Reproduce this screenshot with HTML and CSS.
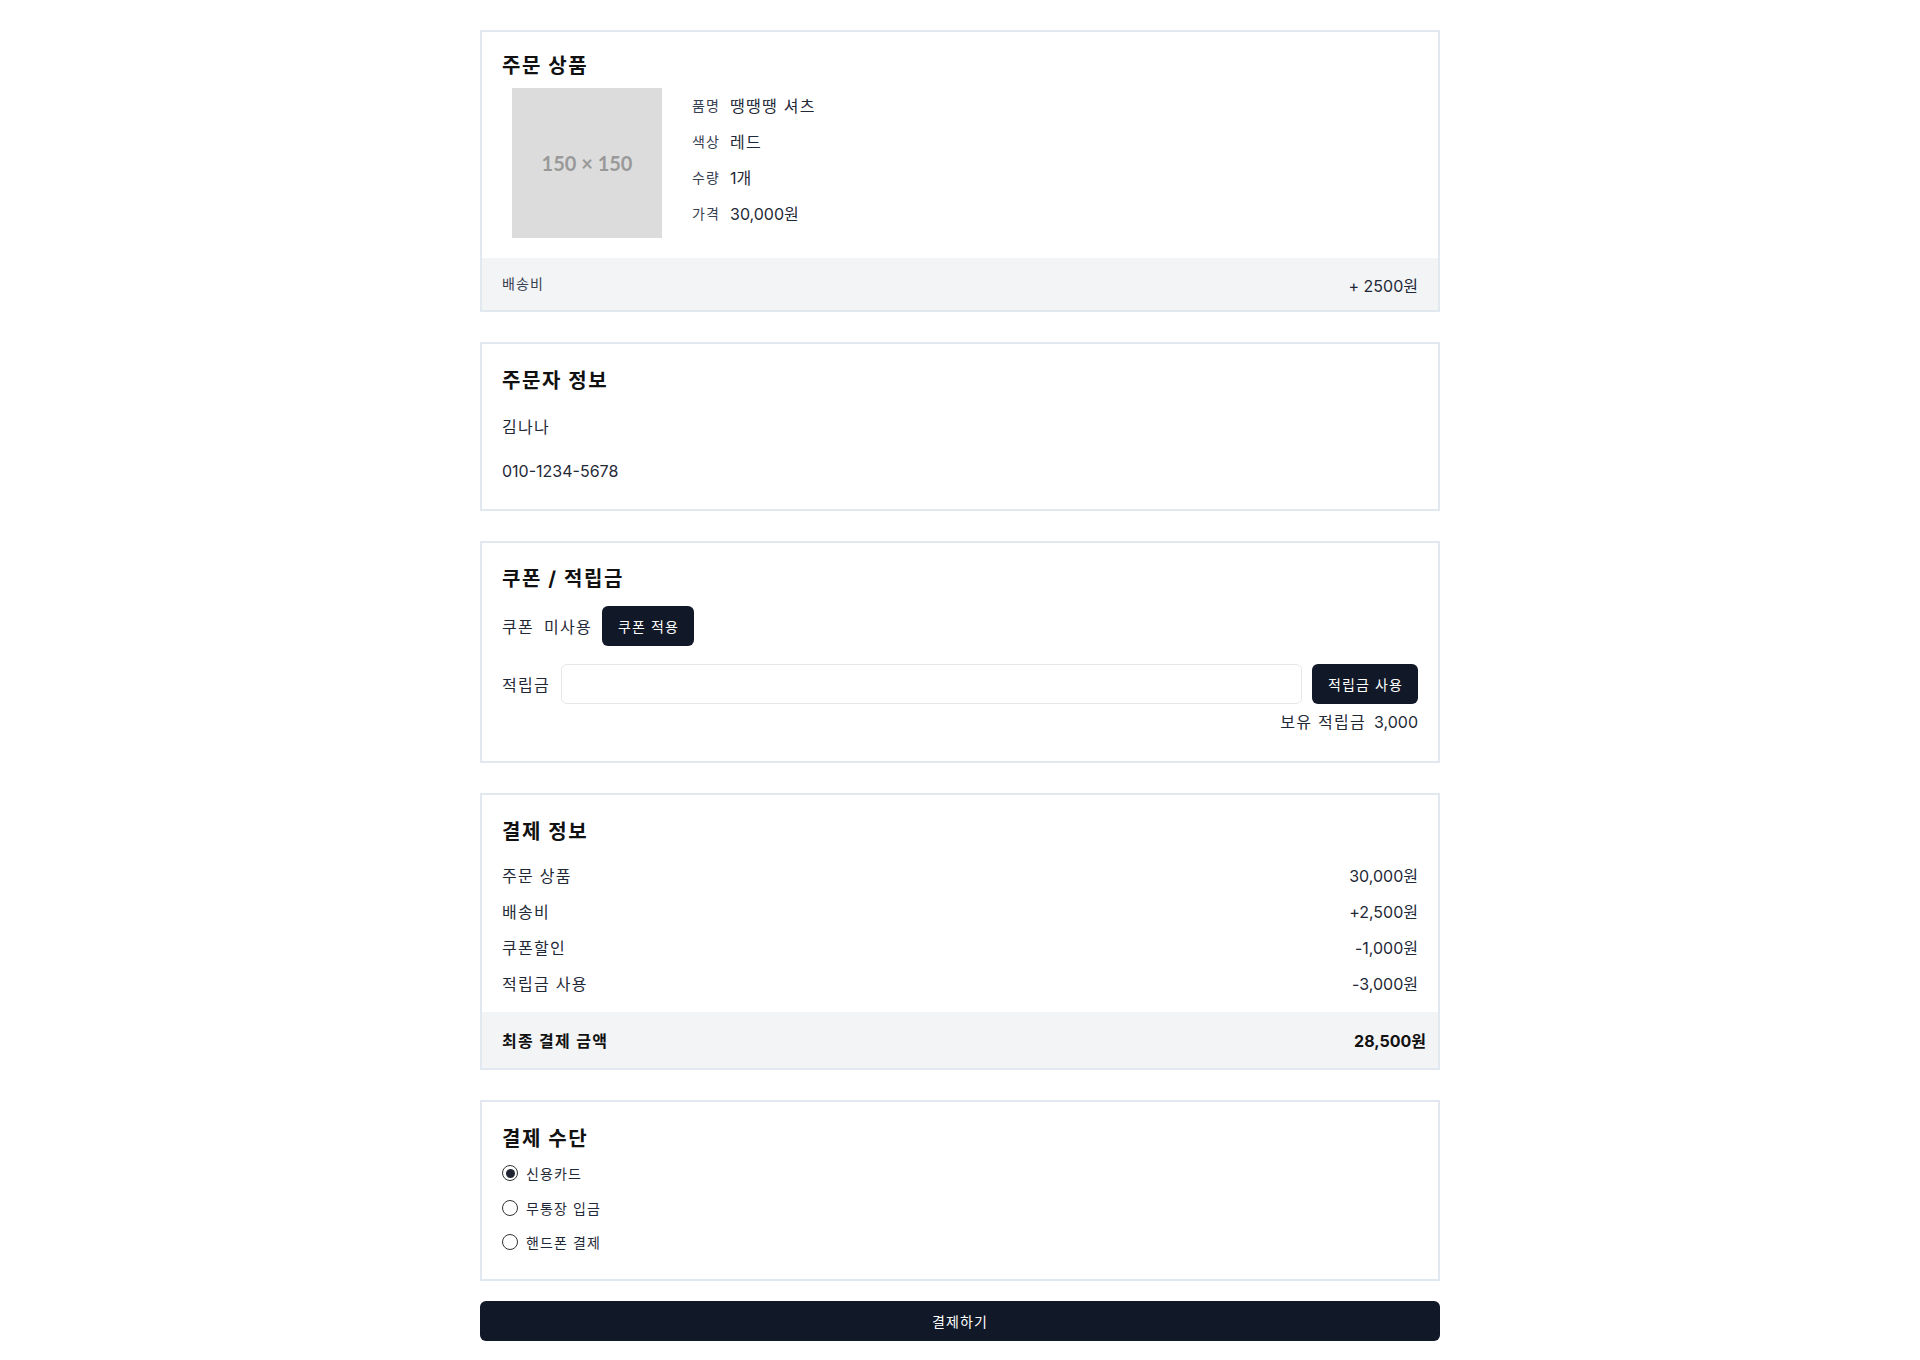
FILE: index.html
```html
<!DOCTYPE html>
<html lang="ko">
<head>
<meta charset="utf-8">
<title>주문/결제</title>
<link rel="stylesheet" href="styles.css">
</head>
<body>
<main class="page">
  <section class="card">
    <div class="card-body product-body">
      <h2 class="card-title title-product">주문 상품</h2>
      <div class="product">
        <div class="thumb">150 × 150</div>
        <dl class="info">
          <div class="info-row"><dt>품명</dt><dd class="ko">땡땡땡 셔츠</dd></div>
          <div class="info-row"><dt>색상</dt><dd class="ko">레드</dd></div>
          <div class="info-row"><dt>수량</dt><dd>1개</dd></div>
          <div class="info-row"><dt>가격</dt><dd>30,000원</dd></div>
        </dl>
      </div>
    </div>
    <div class="card-foot ship-foot">
      <span class="foot-label">배송비</span>
      <span class="foot-value">+ 2500원</span>
    </div>
  </section>

  <section class="card">
    <div class="card-body buyer-body">
      <h2 class="card-title">주문자 정보</h2>
      <p class="buyer-line ko">김나나</p>
      <p class="buyer-line">010-1234-5678</p>
    </div>
  </section>

  <section class="card">
    <div class="card-body coupon-body">
      <h2 class="card-title title-coupon">쿠폰 / 적립금</h2>
      <div class="coupon-row">
        <span class="coupon-label">쿠폰</span>
        <span class="coupon-state">미사용</span>
        <button class="btn-dark" type="button">쿠폰 적용</button>
      </div>
      <div class="points-row">
        <label class="points-label" for="points">적립금</label>
        <input class="points-input" id="points" type="text">
        <button class="btn-dark" type="button">적립금 사용</button>
      </div>
      <div class="balance"><span class="ko">보유 적립금</span><span class="balance-num">3,000</span></div>
    </div>
  </section>

  <section class="card">
    <div class="card-body summary-body">
      <h2 class="card-title title-summary">결제 정보</h2>
      <div class="sum-row"><span class="ko">주문 상품</span><span>30,000원</span></div>
      <div class="sum-row"><span class="ko">배송비</span><span>+2,500원</span></div>
      <div class="sum-row"><span class="ko">쿠폰할인</span><span>-1,000원</span></div>
      <div class="sum-row"><span class="ko">적립금 사용</span><span>-3,000원</span></div>
    </div>
    <div class="card-foot total-foot">
      <span class="ko">최종 결제 금액</span>
      <span>28,500원</span>
    </div>
  </section>

  <section class="card">
    <div class="card-body method-body">
      <h2 class="card-title title-method">결제 수단</h2>
      <label class="radio-row"><input type="radio" name="pay" checked><span>신용카드</span></label>
      <label class="radio-row"><input type="radio" name="pay"><span>무통장 입금</span></label>
      <label class="radio-row"><input type="radio" name="pay"><span>핸드폰 결제</span></label>
    </div>
  </section>

  <button class="pay-btn" type="button">결제하기</button>
</main>
</body>
</html>
```

FILE: styles.css
```css
* { box-sizing: border-box; }

html, body {
  margin: 0;
  padding: 0;
  background: #ffffff;
}

body {
  font-family: "Inter", "Noto Sans CJK KR", sans-serif;
  color: #1f2937;
  font-size: 16px;
}

/* Hangul-only text: widen to match the reference's full-width Hangul */
.ko,
.card-title,
.info-row dt,
.foot-label,
.coupon-label,
.coupon-state,
.points-label,
.radio-row span,
.btn-dark,
.pay-btn {
  letter-spacing: 0.08em;
}

.page {
  width: 960px;
  margin: 0 auto;
  padding: 30px 0 20px;
  display: flex;
  flex-direction: column;
}

.card {
  border: 2px solid #e2e8f0;
  background: #fff;
  margin-bottom: 30px;
}

.card-body {
  padding: 23px 20px 20px;
  display: flex;
  flex-direction: column;
}

.card-title {
  margin: 0 0 14px;
  font-size: 20px;
  line-height: 28px;
  font-weight: 700;
  color: #111111;
}

/* product */
.product-body { padding-top: 20px; }

.title-product { margin-bottom: 8px; }

.product {
  display: flex;
  padding-left: 10px;
}

.thumb {
  width: 150px;
  height: 150px;
  background: #dcdcdc;
  color: #999999;
  font-family: "Lato", sans-serif;
  font-weight: 700;
  font-size: 20px;
  display: flex;
  align-items: center;
  justify-content: center;
  flex-shrink: 0;
}

.info {
  margin: 0 0 0 30px;
  padding-top: 5px;
  display: flex;
  flex-direction: column;
  gap: 12px;
}

.info-row {
  display: flex;
  align-items: center;
  height: 24px;
  gap: 10px;
}

.info-row dt {
  font-size: 14px;
  color: #374151;
}

.info-row dd {
  margin: 0;
  font-size: 16px;
  color: #1f2937;
}

.card-foot {
  background: #f3f4f6;
  display: flex;
  justify-content: space-between;
  align-items: center;
}

.ship-foot {
  height: 52px;
  padding: 0 20px;
}

.foot-label {
  font-size: 14px;
  color: #374151;
  margin-top: -2px;
}

.foot-value {
  font-size: 16px;
  margin-top: 2px;
}

/* buyer */
.buyer-body { padding-bottom: 26px; }

.card-title + .buyer-line { margin-top: 6px; }

.buyer-line {
  margin: 20px 0 0;
  line-height: 24px;
  font-size: 16px;
}

/* coupon */
.coupon-body {
  padding-top: 22px;
  padding-bottom: 27px;
}

.title-coupon { margin-bottom: 13px; }

.coupon-row {
  display: flex;
  align-items: center;
}

.coupon-label { margin-right: 10px; }
.coupon-state { margin-right: 10px; }

.btn-dark {
  height: 40px;
  padding: 0 15px 0 16px;
  border: none;
  border-radius: 6px;
  background: #111827;
  color: #ffffff;
  font-family: "Inter", "Noto Sans CJK KR", sans-serif;
  font-size: 14px;
  cursor: pointer;
}

.points-row {
  display: flex;
  align-items: center;
  margin-top: 18px;
}

.points-label { margin-right: 11px; }

.points-input {
  flex: 1;
  height: 40px;
  border: 1px solid #e5e7eb;
  border-radius: 6px;
  margin-right: 10px;
  padding: 0 12px;
  font-size: 16px;
  outline: none;
}

.balance {
  margin-top: 6px;
  display: flex;
  justify-content: flex-end;
  line-height: 24px;
}

.balance-num { margin-left: 8px; }

/* summary */
.summary-body { padding-bottom: 16px; }

.title-summary { margin-bottom: 18px; }

.sum-row {
  display: flex;
  justify-content: space-between;
  line-height: 24px;
  font-size: 16px;
}

.sum-row + .sum-row { margin-top: 12px; }

.total-foot {
  height: 56px;
  padding: 0 12px 0 20px;
  font-weight: 700;
  color: #111111;
}

/* method */
.method-body { padding-bottom: 27px; }

.title-method { margin-bottom: 10px; }

.radio-row {
  display: flex;
  align-items: center;
  gap: 8px;
  height: 20px;
  font-size: 14px;
  cursor: pointer;
}

.radio-row + .radio-row { margin-top: 14.5px; }

.radio-row input {
  appearance: none;
  -webkit-appearance: none;
  margin: 0;
  width: 16px;
  height: 16px;
  border: 1.5px solid #333;
  border-radius: 50%;
  display: grid;
  place-items: center;
  background: #fff;
}

.radio-row input:checked::after {
  content: "";
  width: 9px;
  height: 9px;
  border-radius: 50%;
  background: #1f2430;
}

.pay-btn {
  margin-top: -10px;
  height: 40px;
  width: 100%;
  border: none;
  border-radius: 6px;
  background: #111827;
  color: #ffffff;
  font-family: "Inter", "Noto Sans CJK KR", sans-serif;
  font-size: 14px;
  cursor: pointer;
}
```
